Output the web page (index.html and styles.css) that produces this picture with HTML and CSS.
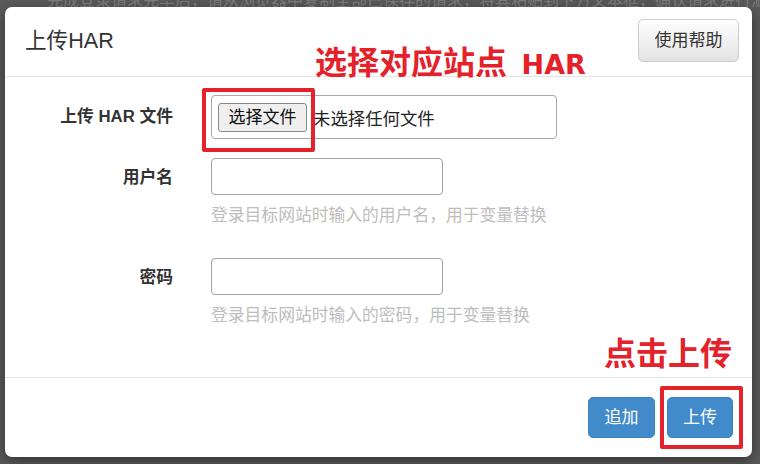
FILE: index.html
```html
<!DOCTYPE html>
<html lang="zh-CN">
<head>
<meta charset="utf-8">
<title>上传HAR</title>
<link rel="stylesheet" href="styles.css">
</head>
<body>
<div class="page">
  <p class="page-text">完成登录请求完毕后，请从浏览器中复制全部已保存的请求，将其粘贴到下方文本框，确认请求进行测试</p>
</div>
<div class="modal">
  <div class="modal-header">
    <h4 class="modal-title">上传HAR</h4>
    <button class="btn btn-default">使用帮助</button>
  </div>
  <div class="modal-body">
    <div class="form-group">
      <label class="control-label">上传 HAR 文件</label>
      <div class="control">
        <div class="file-input">
          <span class="file-btn">选择文件</span>
          <span class="file-name">未选择任何文件</span>
        </div>
      </div>
    </div>
    <div class="form-group mid">
      <label class="control-label">用户名</label>
      <div class="control">
        <div class="text-input"></div>
        <p class="help">登录目标网站时输入的用户名，用于变量替换</p>
      </div>
    </div>
    <div class="form-group">
      <label class="control-label">密码</label>
      <div class="control">
        <div class="text-input"></div>
        <p class="help">登录目标网站时输入的密码，用于变量替换</p>
      </div>
    </div>
  </div>
  <div class="modal-footer">
    <button class="btn btn-primary">追加</button>
    <button class="btn btn-primary">上传</button>
  </div>

  <div class="note note-top">选择对应站点&nbsp;&nbsp;<span class="note-latin">HAR</span></div>
  <div class="note note-bottom">点击上传</div>
  <div class="mark mark-file"></div>
  <div class="mark mark-upload"></div>
</div>
</body>
</html>
```

FILE: styles.css
```css
* { box-sizing: border-box; }
html, body { margin: 0; padding: 0; }
body {
  width: 760px;
  height: 464px;
  overflow: hidden;
  background: #5a5a5a;
  font-family: "Liberation Sans", "Noto Sans CJK SC", sans-serif;
  font-size: 17px;
  color: #333;
  position: relative;
}
.page { padding: 0 0 0 47px; height: 7px; overflow: hidden; }
.page-text {
  margin: -9px 0 0;
  font-size: 16px;
  line-height: 20px;
  color: #7e7e7e;
  white-space: nowrap;
}

.modal {
  position: absolute;
  left: 5px;
  top: 7px;
  width: 747px;
  background: #fff;
  border-radius: 7px;
  box-shadow: 0 4px 14px rgba(0,0,0,0.45);
}
.modal-header {
  height: 70px;
  border-bottom: 1px solid #e5e5e5;
  display: flex;
  justify-content: space-between;
  align-items: flex-start;
  padding: 0 13px 0 20px;
}
.modal-title {
  margin: 21px 0 0;
  font-size: 21.6px;
  line-height: 26px;
  font-weight: normal;
  color: #333;
}
.btn {
  font-family: "Liberation Sans", "Noto Sans CJK SC", sans-serif;
  font-size: 17px;
  line-height: 24px;
  border-radius: 5px;
  cursor: pointer;
}
.btn-default {
  margin-top: 12px;
  width: 101px;
  height: 43px;
  color: #333;
  border: 1px solid #ccc;
  background: linear-gradient(#ffffff, #e3e3e3);
}
.btn-primary {
  width: 67px;
  height: 41px;
  color: #fff;
  border: 1px solid #3a82c4;
  background: #428bca;
  padding: 0;
}

.modal-body {
  height: 300px;
  padding-top: 18px;
}
.form-group {
  display: flex;
  align-items: flex-start;
  gap: 38px;
  margin-bottom: 19px;
}
.form-group.mid { margin-bottom: 30px; }
.control-label {
  width: 168px;
  text-align: right;
  font-weight: bold;
  font-size: 16.8px;
  line-height: 24px;
  color: #333;
  padding-top: 8px;
}
.form-group:first-child .control-label { padding-top: 10px; }
.control { display: flex; flex-direction: column; }

.file-input {
  width: 346px;
  height: 44px;
  border: 1px solid #a9a9a9;
  border-radius: 4px;
  display: flex;
  align-items: center;
  padding-left: 6px;
  gap: 6px;
}
.file-btn {
  width: 89px;
  height: 29px;
  border: 1px solid #8a8a8a;
  border-radius: 3px;
  background: #efefef;
  font-size: 17px;
  line-height: 27px;
  text-align: center;
  color: #111;
}
.file-name { font-size: 17.4px; color: #222; }

.text-input {
  width: 232px;
  height: 37px;
  border: 1px solid #a3a3a3;
  border-radius: 4px;
}
.help {
  margin: 9px 0 0;
  font-size: 16.8px;
  line-height: 24px;
  color: #bdbdbd;
  white-space: nowrap;
}

.modal-footer {
  border-top: 1px solid #e5e5e5;
  display: flex;
  justify-content: flex-end;
  gap: 12px;
  padding: 19px 19px 19px 0;
}
.modal-footer .btn:last-child { width: 66px; }

.note {
  position: absolute;
  color: #e3222b;
  font-weight: bold;
  font-family: "Noto Sans CJK SC", sans-serif;
  white-space: nowrap;
}
.note-top {
  left: 310px;
  top: 31px;
  font-size: 32px;
  line-height: 44px;
}
.note-latin {
  font-family: "DejaVu Sans", "Liberation Sans", sans-serif;
  font-size: 27px;
}
.note-bottom {
  left: 599px;
  top: 322px;
  font-size: 32px;
  line-height: 44px;
}
.mark {
  position: absolute;
  border: 4px solid #e3222b;
  border-radius: 2px;
}
.mark-file { left: 197px; top: 81px; width: 113px; height: 64px; }
.mark-upload { left: 655px; top: 379px; width: 83px; height: 63px; }
```
